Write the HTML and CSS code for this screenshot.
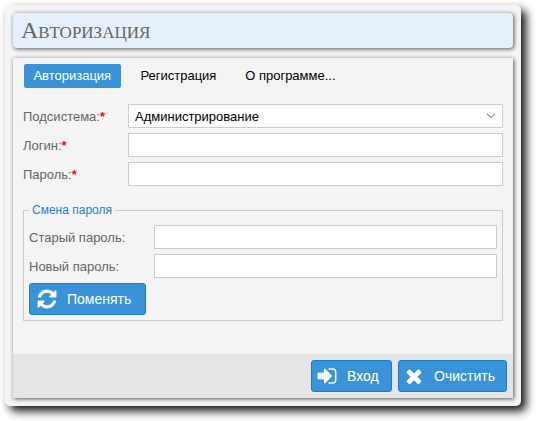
FILE: index.html
```html
<!DOCTYPE html>
<html lang="ru">
<head>
<meta charset="utf-8">
<title>Авторизация</title>
<link rel="stylesheet" href="styles.css">
</head>
<body>
<main class="window">
  <h1 class="header">Авторизация</h1>
  <form class="panel">
    <nav class="tabs">
      <a class="tab active">Авторизация</a>
      <a class="tab">Регистрация</a>
      <a class="tab">О программе...</a>
    </nav>
    <section class="fields">
      <div class="row"><label>Подсистема:<b>*</b></label>
        <div class="control">Администрирование
          <svg class="chevron" viewBox="0 0 10 6"><path d="M1 .7 5 4.7 9 .7"/></svg>
        </div>
      </div>
      <div class="row"><label>Логин:<b>*</b></label><div class="control"></div></div>
      <div class="row"><label>Пароль:<b>*</b></label><div class="control"></div></div>
    </section>
    <fieldset class="change">
      <legend>Смена пароля</legend>
      <div class="row"><label>Старый пароль:</label><div class="control"></div></div>
      <div class="row"><label>Новый пароль:</label><div class="control"></div></div>
      <button type="button" class="button change-button">
        <svg class="icon" viewBox="-128 -128 1792 1792"><path d="M1511 928q0 5-1 7-64 268-268 434.500t-478 166.500q-146 0-282.500-55t-243.500-157l-129 129q-19 19-45 19t-45-19-19-45v-448q0-26 19-45t45-19h448q26 0 45 19t19 45-19 45l-137 137q71 66 161 102t187 36q134 0 250-65t186-179q11-17 53-117 8-23 30-23h192q13 0 22.500 9.500t9.500 22.500zm25-800v448q0 26-19 45t-45 19h-448q-26 0-45-19t-19-45 19-45l138-138q-148-137-349-137-134 0-250 65t-186 179q-11 17-53 117-8 23-30 23h-199q-13 0-22.500-9.500t-9.500-22.500v-7q65-268 270-434.500t480-166.500q146 0 284 55.500t245 156.500l130-129q19-19 45-19t45 19 19 45z"/></svg>
        <span>Поменять</span>
      </button>
    </fieldset>
    <footer class="footer">
      <button type="button" class="button login-button">
        <svg class="icon" viewBox="0 0 1792 1792"><path d="M1312 896q0 26-19 45l-544 544q-19 19-45 19t-45-19-19-45v-288h-448q-26 0-45-19t-19-45v-384q0-26 19-45t45-19h448v-288q0-26 19-45t45-19 45 19l544 544q19 19 19 45zm352-352v704q0 119-84.500 203.500t-203.500 84.500h-320q-13 0-22.500-9.500t-9.500-22.500q0-2-1-20t-.5-26.500 3-23.500 10-19.500 20.500-6.500h320q66 0 113-47t47-113v-704q0-66-47-113t-113-47h-312l-11.500-1-11.500-3-8-5.500-7-9-2-13.500q0-2-1-20t-.5-26.500 3-23.500 10-19.500 20.500-6.500h320q119 0 203.500 84.500t84.500 203.500z"/></svg>
        <span>Вход</span>
      </button>
      <button type="button" class="button clear-button">
        <svg class="icon" viewBox="0 0 1792 1792"><path d="M1490 1322q0 40-28 68l-136 136q-28 28-68 28t-68-28l-294-294-294 294q-28 28-68 28t-68-28l-136-136q-28-28-28-68t28-68l294-294-294-294q-28-28-28-68t28-68l136-136q28-28 68-28t68 28l294 294 294-294q28-28 68-28t68 28l136 136q28 28 28 68t-28 68l-294 294 294 294q28 28 28 68z"/></svg>
        <span>Очистить</span>
      </button>
    </footer>
  </form>
</main>
</body>
</html>
```
FILE: styles.css
```css
* { box-sizing: border-box; }

body {
  margin: 0;
  padding: 5px;
  min-height: 421px;
  background: #fff;
  font: 13px "Liberation Sans", Arial, sans-serif;
  color: #666;
}

.window {
  width: 516px;
  height: 401px;
  padding: 8px;
  display: flex;
  flex-direction: column;
  gap: 10px;
  background: #f4f4f4;
  border-radius: 5px;
  box-shadow: 5px 5px 10px #111;
}

.header {
  margin: 0;
  height: 35px;
  padding-left: 8px;
  background: #e5f0fa;
  border-radius: 4px;
  box-shadow: 1px 1px 4px #555;
  font: small-caps 24px/34px "Liberation Serif", "Times New Roman", serif;
}

.panel {
  height: 340px;
  display: flex;
  flex-direction: column;
  background: #f4f4f4;
  box-shadow: 1px 1px 4px #555;
}

.tabs {
  display: flex;
  gap: 10px;
  padding: 6px 11px 0;
}

.tab {
  height: 24px;
  padding: 0 9.4px;
  line-height: 24px;
  color: #000;
  border-radius: 2px;
}

.active {
  width: 97px;
  color: #fff;
  background: #3a93d6;
}

.fields {
  display: grid;
  gap: 5px;
  padding: 16px 10px 0;
}

.row {
  display: grid;
  grid-template-columns: 105px 1fr;
  height: 24px;
  line-height: 25px;
}

.row b { color: #f00; }

.control {
  display: flex;
  align-items: center;
  justify-content: space-between;
  height: 24px;
  padding: 1px 6px 0;
  background: #fff;
  border: 1px solid #ccc;
  line-height: 23px;
  color: #000;
}

.chevron {
  width: 10px;
  height: 6px;
  margin-top: -1px;
  fill: none;
  stroke: #999;
  stroke-width: 1.3;
}

.change {
  margin: 17px 10px 0;
  height: 118px;
  padding: 8px 5px 5px;
  border: 1px solid #ccc;
}

.change legend {
  margin-left: 0;
  padding: 0 3px;
  height: 14px;
  line-height: 14px;
  font-size: 12px;
  color: #2c7fcb;
}

.change .row {
  grid-template-columns: 125px 1fr;
  margin-bottom: 5px;
}

.button {
  display: flex;
  align-items: center;
  height: 32px;
  padding: 0 0 0 7px;
  background: #3a93d6;
  border: 1px solid #157dca;
  border-radius: 3px;
  color: #fff;
  font: 14px "Liberation Sans", Arial, sans-serif;
}

.icon {
  width: 22px;
  height: 22px;
  margin-top: -1px;
  fill: #fff;
}

.change-button { width: 117px; padding-left: 6px; }
.change-button span { margin-left: 9px; }

.footer {
  margin-top: auto;
  height: 44px;
  display: flex;
  justify-content: flex-end;
  gap: 6px;
  padding: 6px;
  background: #e5e5e5;
}

.login-button { width: 81px; padding-left: 4px; }
.login-button span { margin-left: 9px; }
.clear-button { width: 109px; padding-left: 4px; }
.clear-button span { margin-left: 9px; }
```
